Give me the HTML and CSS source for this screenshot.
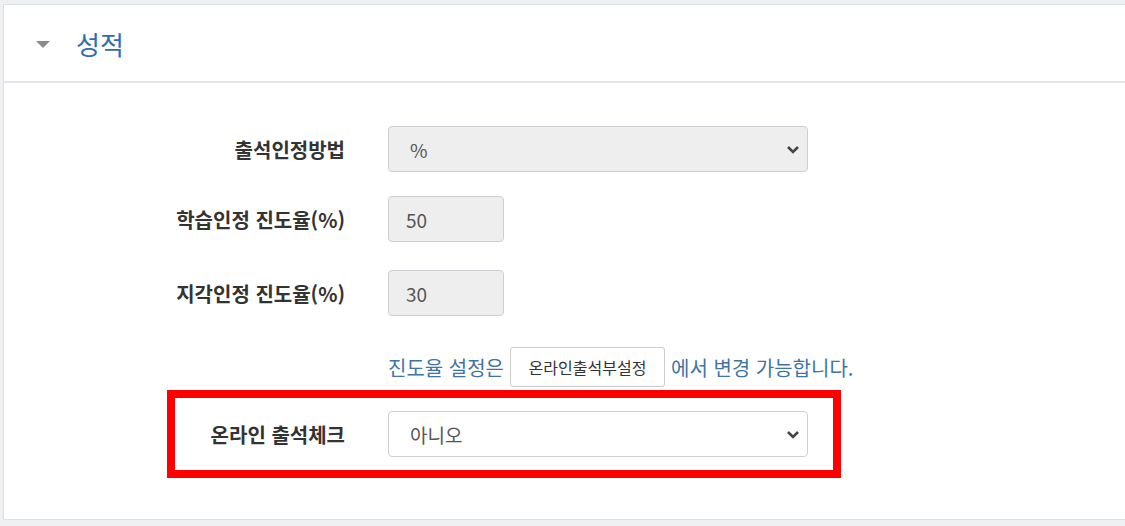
FILE: index.html
```html
<!DOCTYPE html>
<html lang="ko">

<head>
    <meta charset="UTF-8">
    <meta name="viewport" content="width=device-width, initial-scale=1.0">
    <title>성적</title>
    <link rel="stylesheet" href="styles.css">
</head>

<body>
    <section class="panel">
        <header class="panel-head">
            <span class="caret"></span>
            <h2>성적</h2>
        </header>

        <div class="panel-body">
            <div class="row">
                <label class="row-label" for="method">출석인정방법</label>
                <div class="select-wrap">
                    <select id="method" class="field field-disabled">
                        <option>%</option>
                    </select>
                    <svg class="chev" width="14" height="9" viewBox="0 0 14 9"><path d="M2 2 L7 7 L12 2" fill="none" stroke="#444" stroke-width="2.6"/></svg>
                </div>
            </div>

            <div class="row row-gap">
                <label class="row-label" for="study">학습인정 진도율(%)</label>
                <input id="study" class="field field-disabled field-short" type="text" value="50" readonly>
            </div>

            <div class="row">
                <label class="row-label" for="late">지각인정 진도율(%)</label>
                <input id="late" class="field field-disabled field-short" type="text" value="30" readonly>
            </div>

            <p class="help">
                진도율 설정은
                <button type="button" class="help-btn">온라인출석부설정</button>
                에서 변경 가능합니다.
            </p>

            <div class="row row-marked">
                <label class="row-label" for="online">온라인 출석체크</label>
                <div class="select-wrap">
                    <select id="online" class="field">
                        <option>아니오</option>
                        <option>예</option>
                    </select>
                    <svg class="chev" width="14" height="9" viewBox="0 0 14 9"><path d="M2 2 L7 7 L12 2" fill="none" stroke="#444" stroke-width="2.6"/></svg>
                </div>
            </div>
        </div>
    </section>
</body>

</html>
```

FILE: styles.css
```css
body {
    font-family: "Noto Sans CJK KR", "Noto Sans", sans-serif;
    margin: 0;
    padding: 4px 0 5px 3px;
    background-color: #eef0f2;
    color: #333;
}

.panel {
    background-color: #fff;
    border: 1px solid #dcdfe3;
    border-right: none;
}

.panel-head {
    height: 78px;
    display: flex;
    align-items: center;
    border-bottom: 2px solid #e3e5e8;
    box-sizing: border-box;
    padding-left: 32px;
}

.caret {
    width: 0;
    height: 0;
    border-left: 7px solid transparent;
    border-right: 7px solid transparent;
    border-top: 7px solid #8a8a8a;
    margin-right: 26px;
    margin-top: 2px;
}

.panel-head h2 {
    margin: 0;
    font-size: 26px;
    font-weight: 400;
    color: #2f6db3;
}

.panel-body {
    padding: 43px 0 41px 0;
}

.row {
    display: flex;
    align-items: center;
    margin-bottom: 24px;
}

.row-gap {
    margin-bottom: 28px;
}

.row-label {
    width: 341px;
    margin-right: 43px;
    text-align: right;
    font-size: 20px;
    font-weight: 700;
    color: #333;
    flex-shrink: 0;
}

.field {
    font-family: inherit;
    font-size: 19px;
    color: #555;
    height: 46px;
    border: 1px solid #ccd0d4;
    border-radius: 4px;
    background-color: #fff;
    box-sizing: border-box;
    padding: 0 21px;
    margin: 0;
    outline: none;
}

.field-disabled {
    background-color: #eee;
}

.field-short {
    width: 116px;
    padding: 0 17px;
}

.select-wrap {
    position: relative;
    width: 420px;
}

.select-wrap select {
    width: 100%;
    appearance: none;
    -webkit-appearance: none;
}

.chev {
    position: absolute;
    right: 8px;
    top: 19px;
    pointer-events: none;
}

.help {
    margin: 31px 0 3px 384px;
    display: flex;
    align-items: center;
    gap: 6px;
    font-size: 20px;
    color: #3f74a6;
}

.help-btn {
    font-family: inherit;
    font-size: 16px;
    color: #333;
    background-color: #fff;
    border: 1px solid #ccc;
    border-radius: 3px;
    height: 40px;
    width: 155px;
    padding: 0;
    cursor: pointer;
}

.row-marked {
    margin: 0 0 0 163px;
    width: 674px;
    height: 88px;
    border: 8px solid #ff0000;
    box-sizing: border-box;
}

.row-marked .row-label {
    width: 170px;
}
```
